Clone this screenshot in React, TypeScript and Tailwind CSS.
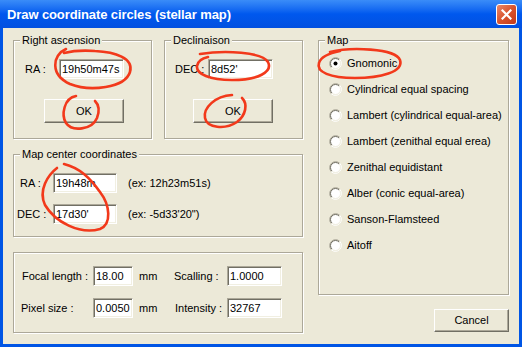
import React from 'react';

const inputCls =
  "h-[20px] bg-white border border-t-[#ACA899] border-l-[#ACA899] border-b-white border-r-white shadow-[inset_1px_1px_0_#716F64,inset_-1px_-1px_0_#F1EFE2] px-[2px] outline-none text-[11px] leading-[16px]";

const buttonCls =
  "bg-[#ECE9D8] border border-t-white border-l-white border-b-[#716F64] border-r-[#716F64] shadow-[inset_-1px_-1px_0_#ACA899] flex items-center justify-center";

const Field = ({ value, className }: { value: string; className: string }) => (
  <input defaultValue={value} className={`${inputCls} ${className}`} />
);

const Radio = ({ checked }: { checked?: boolean }) => (
  <svg width="13" height="13" viewBox="0 0 13 13" className="shrink-0">
    <circle cx="6.5" cy="6.5" r="5" fill="#fff" />
    <path d="M2.26 10.74 A6 6 0 0 1 10.74 2.26" stroke="#ACA899" fill="none" />
    <path d="M10.74 2.26 A6 6 0 0 1 2.26 10.74" stroke="#fff" fill="none" />
    <path d="M2.96 10.04 A5 5 0 0 1 10.04 2.96" stroke="#716F64" fill="none" />
    <path d="M10.04 2.96 A5 5 0 0 1 2.96 10.04" stroke="#F1EFE2" fill="none" />
    {checked && <circle cx="6.5" cy="6.5" r="2" fill="#000" />}
  </svg>
);

const Group = ({
  title,
  className,
  children,
}: {
  title: string;
  className: string;
  children: React.ReactNode;
}) => (
  <fieldset
    className={`border border-[#ACA899] shadow-[inset_1px_1px_0_#fff,1px_1px_0_#fff] pl-[6px] ${className}`}
  >
    <legend className="px-[2px] leading-[14px] bg-[#ECE9D8]">{title}</legend>
    {children}
  </fieldset>
);

const projections = [
  "Gnomonic",
  "Cylindrical equal spacing",
  "Lambert (cylindrical equal-area)",
  "Lambert (zenithal equal erea)",
  "Zenithal equidistant",
  "Alber (conic equal-area)",
  "Sanson-Flamsteed",
  "Aitoff",
];

export default function App() {
  return (
    <div className="relative w-[522px] h-[347px] bg-[#0055E5] flex flex-col text-[11px] text-black font-['Liberation_Sans',Arial,sans-serif] overflow-hidden">
      {/* title bar */}
      <div className="h-[28px] shrink-0 flex items-center pl-[7px] pr-[5px] bg-gradient-to-b from-[#3A8CF8] via-[#0058EE] to-[#0250E0]">
        <span className="text-white font-bold text-[13px] pt-[1px] tracking-[-0.1px]">
          Draw coordinate circles (stellar map)
        </span>
        <div className="ml-auto w-[21px] h-[21px] rounded-[3px] border border-white bg-gradient-to-br from-[#E9886A] via-[#D9532C] to-[#C2391A] flex items-center justify-center">
          <svg width="11" height="11" viewBox="0 0 11 11">
            <path d="M1.5 1.5 L9.5 9.5 M9.5 1.5 L1.5 9.5" stroke="#fff" strokeWidth="2.2" strokeLinecap="square" />
          </svg>
        </div>
      </div>

      {/* dialog body */}
      <div className="flex-1 mx-[3px] mb-[3px] bg-[#ECE9D8] flex pl-[10px] pt-[5px] gap-[15px]">
        <div className="w-[290px] flex flex-col">
          <div className="flex gap-[12px]">
            <Group title="Right ascension" className="w-[139px] pb-[15px]">
              <div className="flex items-center pt-[12px] pl-[5px]">
                <span className="w-[34px]">RA :</span>
                <Field value="19h50m47s" className="w-[65px]" />
              </div>
              <div className={`${buttonCls} ml-[24px] mt-[20px] w-[80px] h-[24px]`}>OK</div>
            </Group>
            <Group title="Declinaison" className="w-[139px] pb-[15px]">
              <div className="flex items-center pt-[12px] pl-[4px]">
                <span className="w-[33px]">DEC :</span>
                <Field value="8d52'" className="w-[65px]" />
              </div>
              <div className={`${buttonCls} ml-[22px] mt-[20px] w-[80px] h-[24px]`}>OK</div>
            </Group>
          </div>

          <Group title="Map center coordinates" className="mt-[8px] pb-[12px]">
            <div className="flex items-center pt-[12px]">
              <span className="w-[33px]">RA :</span>
              <Field value="19h48m" className="w-[64px]" />
              <span className="ml-[11px]">(ex: 12h23m51s)</span>
            </div>
            <div className="flex items-center mt-[11px]">
              <span className="w-[36px] -ml-[3px]">DEC :</span>
              <Field value="17d30'" className="w-[64px]" />
              <span className="ml-[11px]">(ex: -5d33'20")</span>
            </div>
          </Group>

          <div className="mt-[15px] border border-[#ACA899] shadow-[inset_1px_1px_0_#fff,1px_1px_0_#fff] pl-[8px] pt-[13px] pb-[14px] flex flex-col gap-[12px]">
            <div className="flex items-center">
              <span className="w-[71px]">Focal length :</span>
              <Field value="18.00" className="w-[40px]" />
              <span className="ml-[6px] w-[35px]">mm</span>
              <span className="w-[53px]">Scalling :</span>
              <Field value="1.0000" className="w-[55px]" />
            </div>
            <div className="flex items-center">
              <span className="w-[71px] -ml-[1px] mr-[1px]">Pixel size :</span>
              <Field value="0.0050" className="w-[40px]" />
              <span className="ml-[6px] w-[35px]">mm</span>
              <span className="w-[53px] pl-[1px]">Intensity :</span>
              <Field value="32767" className="w-[55px]" />
            </div>
          </div>
        </div>

        <div className="w-[191px] flex flex-col">
          <Group title="Map" className="h-[262px] pt-[3px]">
            {projections.map((p, i) => (
              <div key={p} className="h-[26px] flex items-center pl-[4px] gap-[5px]">
                <Radio checked={i === 0} />
                <span>{p}</span>
              </div>
            ))}
          </Group>
          <div className={`${buttonCls} self-end mt-[14px] w-[75px] h-[23px]`}>Cancel</div>
        </div>
      </div>

      {/* red hand-drawn marks */}
      <svg
        className="absolute inset-0 pointer-events-none"
        width="522"
        height="347"
        viewBox="0 0 522 347"
        fill="none"
        stroke="#F2391B"
        strokeWidth="2.6"
        strokeLinecap="round"
      >
        <path d="M66 49 C52 55, 50 75, 70 84 C90 92, 125 88, 130 72 C134 58, 115 52, 95 51 C82 50, 72 51, 64 53" />
        <path d="M76 96 C64 98, 61 115, 66 123 C72 132, 92 130, 97 118 C100 110, 98 104, 95 101" />
        <path d="M200 54 C225 50, 262 52, 268 62 C273 72, 258 80, 232 80 C210 80, 196 74, 197 66 C198 60, 203 58, 208 57" />
        <path d="M232 95 C215 96, 203 108, 205 118 C207 128, 225 130, 237 122 C246 115, 248 104, 242 98" />
        <path d="M330 52 C350 47, 395 48, 400 60 C404 72, 380 78, 355 78 C330 78, 316 72, 319 63 C321 56, 330 53, 340 51" />
        <path d="M57 168 C48 175, 38 190, 45 205 C55 222, 80 235, 100 229 C112 224, 110 205, 100 192 C90 178, 80 168, 64 164" />
      </svg>
    </div>
  );
}
